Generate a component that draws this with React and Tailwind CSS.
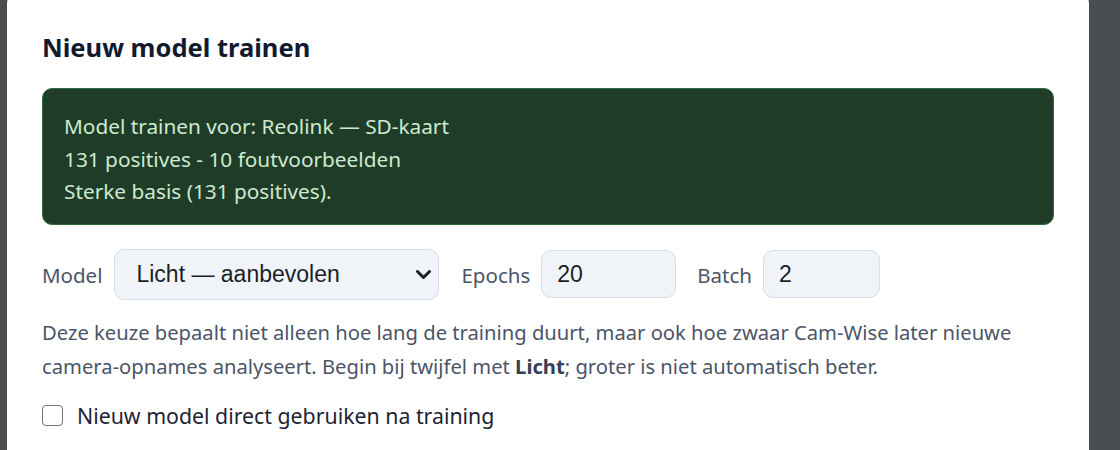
const ui = { fontFamily: '"Noto Sans", "Open Sans", sans-serif' };
const arial = { fontFamily: '"Liberation Sans", Arial, sans-serif' };

const stats = [
    'Model trainen voor: Reolink — SD-kaart',
    '131 positives - 10 foutvoorbeelden',
    'Sterke basis (131 positives).',
];

const field = 'flex items-center rounded-[10px] border border-[#d5dde7] bg-[#f0f4f9] text-[23px] text-[#1b1f26]';

export default function App() {
    return (
        <div className="h-[450px] overflow-hidden bg-[#4a4d52] pl-[7px]" style={ui}>
            <div className="-mt-[12px] w-[1082px] h-[480px] rounded-2xl bg-white px-[35px] pt-[44px]">
                <h2 className="text-[25.5px] leading-[30px] font-bold text-[#111a2e]">Nieuw model trainen</h2>

                <div className="mt-[26px] rounded-[10px] border border-[#2e6b3f] bg-[#1f3c28] pl-[21px] pt-[21px] pb-[16px] text-[20.8px] leading-[32.5px] text-[#cdeacf]">
                    {stats.map(line => (
                        <div key={line}>{line}</div>
                    ))}
                </div>

                <div className="mt-[24px] flex h-[51px] items-center text-[20.5px] text-[#4b5567]">
                    <span className="pt-[2px]">Model</span>
                    <div className={`${field} ml-[12px] h-[51px] w-[325px] justify-between pl-[21px] pr-[7px]`} style={arial}>
                        <span>Licht — aanbevolen</span>
                        <svg width="15" height="9" viewBox="0 0 15 9" fill="none" stroke="#1b1f26" strokeWidth="3" strokeLinecap="round" strokeLinejoin="round">
                            <path d="M1.5 1.5 7.5 7.5 13.5 1.5" />
                        </svg>
                    </div>
                    <span className="ml-[22px] pt-[2px]">Epochs</span>
                    <div className={`${field} ml-[11px] h-[48px] w-[135px] pl-[15px]`} style={arial}>20</div>
                    <span className="ml-[21px] pt-[2px]">Batch</span>
                    <div className={`${field} ml-[11px] h-[48px] w-[117px] pl-[15px]`} style={arial}>2</div>
                </div>

                <p className="mt-[15px] text-[20.2px] leading-[34px] text-[#4b5567]">
                    Deze keuze bepaalt niet alleen hoe lang de training duurt, maar ook hoe zwaar Cam-Wise later nieuwe camera-opnames analyseert. Begin bij twijfel met <b className="font-bold text-[#334155]">Licht</b>; groter is niet automatisch beter.
                </p>

                <label className="mt-[18px] flex h-[30px] items-center gap-[14px] text-[21.3px] text-[#1e2433]">
                    <span className="h-[21px] w-[21px] rounded-[4px] border-[1.5px] border-[#6b7280] bg-white" />
                    <span>Nieuw model direct gebruiken na training</span>
                </label>
            </div>
        </div>
    );
}
